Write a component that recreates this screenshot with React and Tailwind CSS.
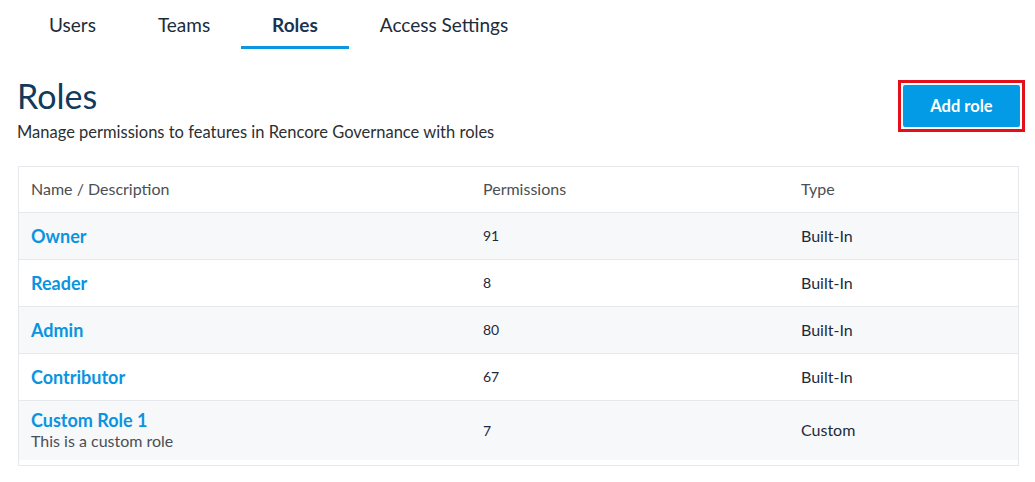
const tabs = ['Users', 'Teams', 'Roles', 'Access Settings'];

const roles = [
  { name: 'Owner', permissions: 91, type: 'Built-In' },
  { name: 'Reader', permissions: 8, type: 'Built-In' },
  { name: 'Admin', permissions: 80, type: 'Built-In' },
  { name: 'Contributor', permissions: 67, type: 'Built-In' },
  { name: 'Custom Role 1', description: 'This is a custom role', permissions: 7, type: 'Custom' },
];

export default function App() {
  return (
    <div className="min-h-[482px] bg-white px-[18px] font-['Lato','Open_Sans',sans-serif] text-[#1d2b3a]">
      {/* Tab strip */}
      <nav className="flex h-[49px]">
        {tabs.map((t) => {
          const active = t === 'Roles';
          return (
            <div
              key={t}
              className={`flex items-center px-[31px] pt-[5px] border-b-[3px] text-[19px] ${
                active ? 'border-[#0a96e0] font-bold text-[#1a344f]' : 'border-transparent text-[#1d2b3a]'
              }`}
            >
              {t}
            </div>
          );
        })}
      </nav>

      {/* Header */}
      <div className="flex items-start justify-between mt-[27px]">
        <div>
          <h1 className="text-[34px] leading-[40px] text-[#113a5c] ml-[-1px]">Roles</h1>
          <p className="mt-[4px] text-[16.5px] text-[#2b2f33] ml-[-1px]">Manage permissions to features in Rencore Governance with roles</p>
        </div>
        <div className="mt-[4px] mr-[-8px] border-[3px] border-[#e3101c] p-[2px]">
          <button className="block h-[42px] w-[117px] rounded-[2px] bg-[#039be5] text-[16.5px] font-bold text-white">
            Add role
          </button>
        </div>
      </div>

      {/* Roles table */}
      <div className="mt-[21px] w-[1001px] border border-[#e6e8eb] pb-[5px]">
        <div className="grid grid-cols-[464px_318px_1fr] h-[45px] items-center text-[16px] text-[#4a4f55]">
          <div className="pl-[12px]">Name / Description</div>
          <div>Permissions</div>
          <div>Type</div>
        </div>
        {roles.map((r, i) => (
          <div
            key={r.name}
            className={`grid grid-cols-[464px_318px_1fr] items-center border-t border-[#e6e8eb] ${
              r.description ? 'h-[60px]' : 'h-[47px]'
            } ${i % 2 === 0 ? 'bg-[#f7f8fa]' : 'bg-white'}`}
          >
            <div className="pl-[12px]">
              <div className="text-[18px] font-bold leading-[22px] text-[#0a94e0]">{r.name}</div>
              {r.description && <div className="text-[16px] leading-[20px] text-[#4a4f55]">{r.description}</div>}
            </div>
            <div className="text-[14px] text-[#1d2b3a]">{r.permissions}</div>
            <div className="text-[16px] text-[#1d2b3a]">{r.type}</div>
          </div>
        ))}
      </div>
    </div>
  );
}
